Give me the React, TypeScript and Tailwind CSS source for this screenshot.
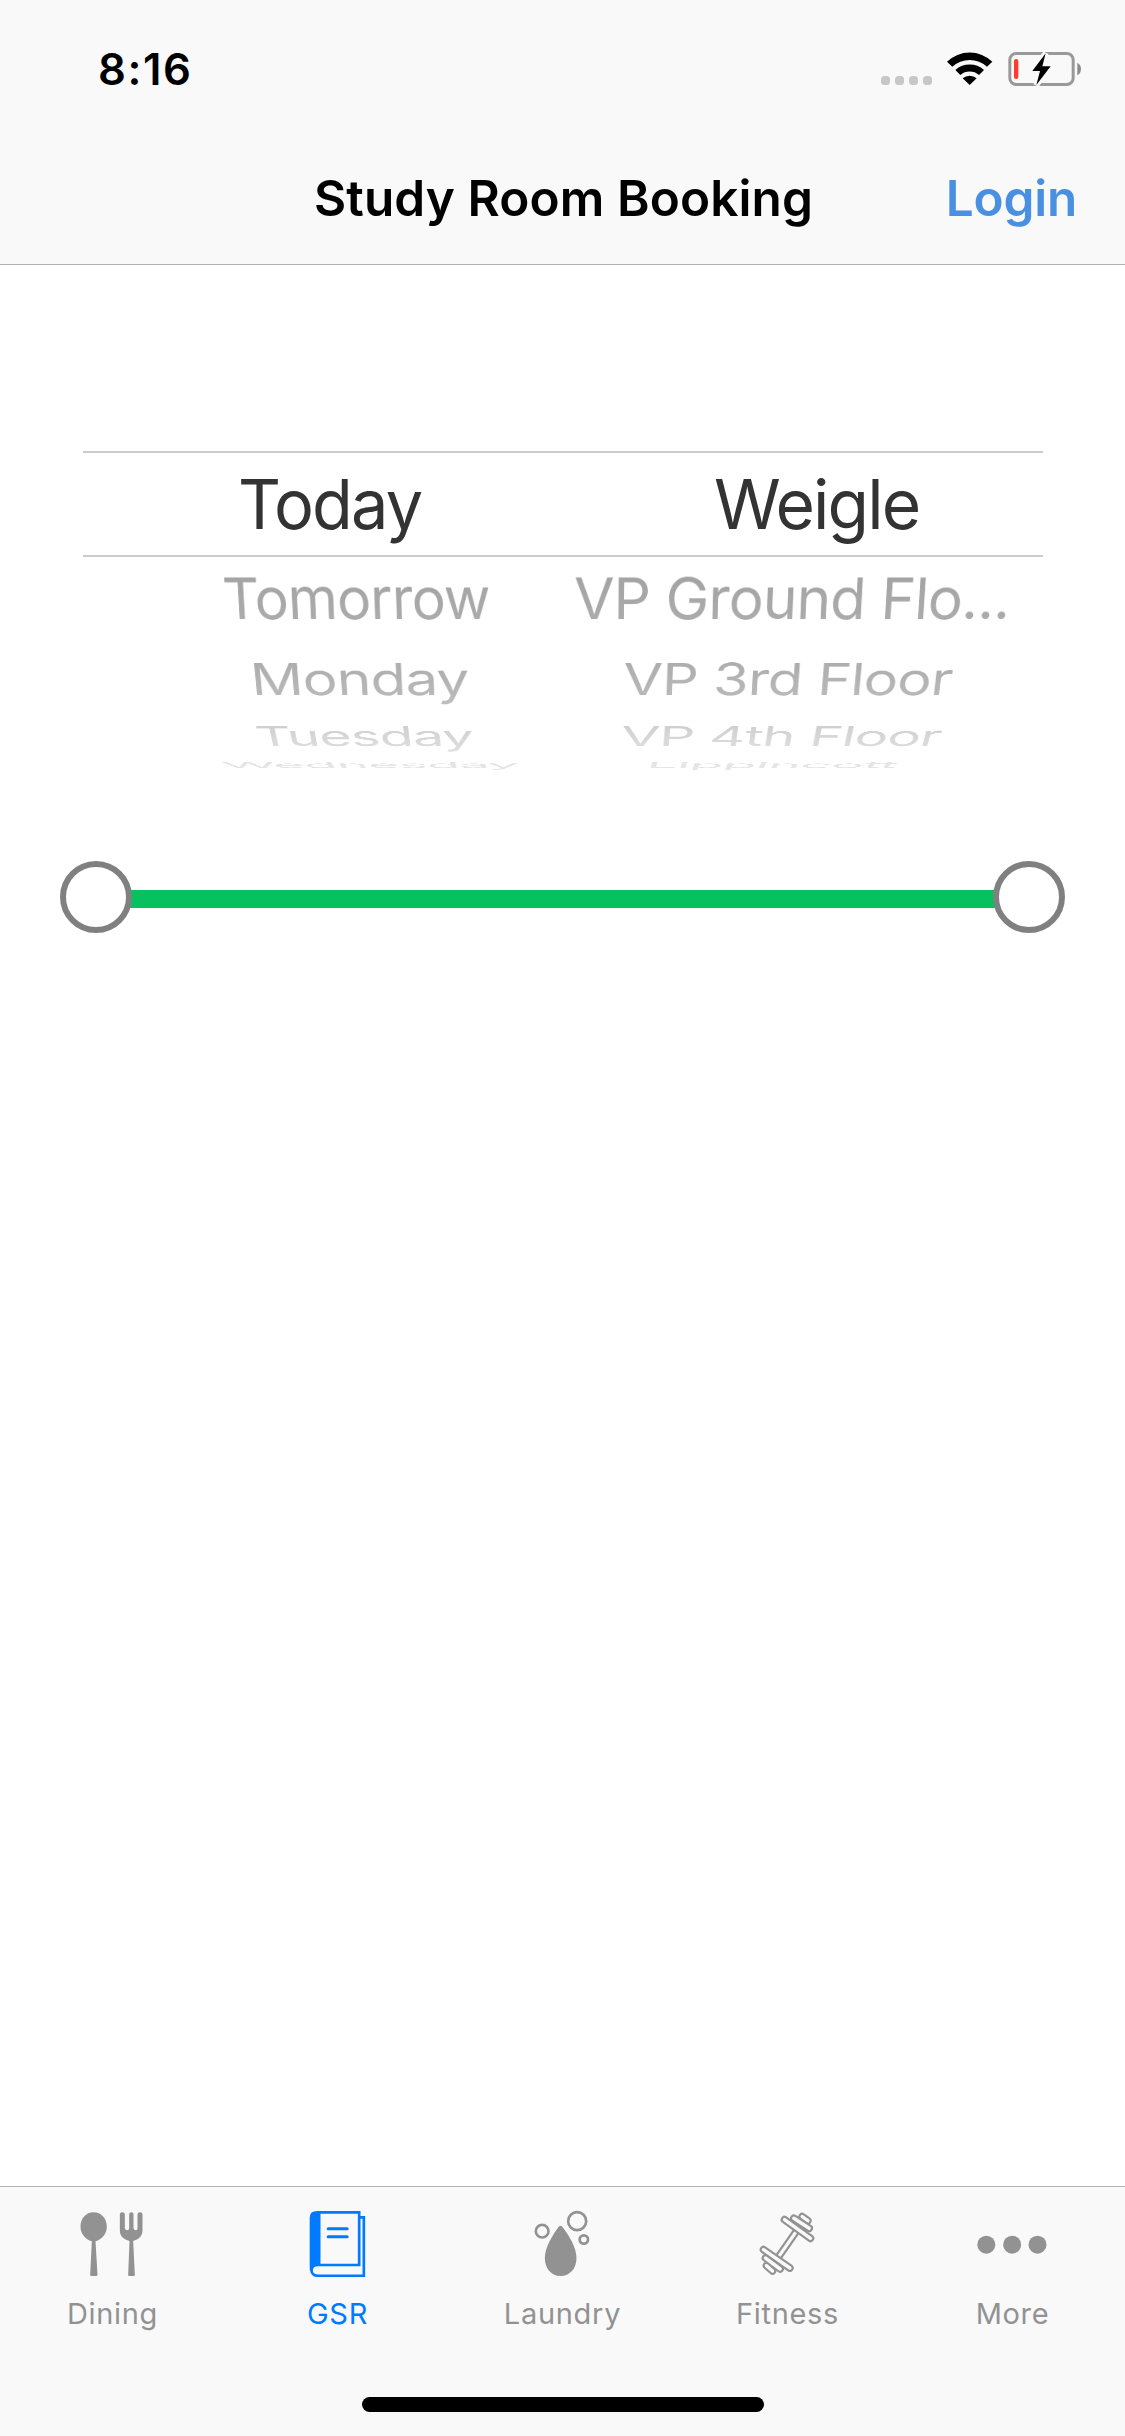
import type { CSSProperties, ReactNode } from 'react';

const PAGE_CENTER = 562.5;

type Word = { text: string; left: number; scale: number };
type Row = {
  box: string;
  baseline: number;
  flatten: number;
  depth: number;
  words: [Word, Word];
};

const selected: Row = {
  box: 'h-[102px] leading-[102px] text-[#333333] tracking-[-1.9px]',
  baseline: 76,
  flatten: 0.99,
  depth: 0,
  words: [
    { text: 'Today', left: 238.3, scale: 0.966 },
    { text: 'Weigle', left: 714, scale: 0.981 },
  ],
};

const upcoming: Row[] = [
  {
    box: 'h-[74px] leading-[74px]',
    baseline: 62,
    flatten: 0.824,
    depth: 0.00015,
    words: [
      { text: 'Tomorrow', left: 224, scale: 0.824 },
      { text: 'VP Ground Flo...', left: 573.5, scale: 0.845 },
    ],
  },
  {
    box: 'h-[78px] leading-[78px]',
    baseline: 64,
    flatten: 0.637,
    depth: 0.0002,
    words: [
      { text: 'Monday', left: 252.2, scale: 0.843 },
      { text: 'VP 3rd Floor', left: 622.7, scale: 0.8295 },
    ],
  },
  {
    box: 'h-[24px] leading-[24px]',
    baseline: 37,
    flatten: 0.392,
    depth: 0.0003,
    words: [
      { text: 'Tuesday', left: 257.5, scale: 0.802 },
      { text: 'VP 4th Floor', left: 621.3, scale: 0.808 },
    ],
  },
  {
    box: 'h-[20px] leading-[20px]',
    baseline: 35,
    flatten: 0.118,
    depth: 0.0003,
    words: [
      { text: 'Wednesday', left: 225, scale: 0.784 },
      { text: 'Lippincott', left: 646.3, scale: 0.797 },
    ],
  },
];

/* Tilts a word away from the viewer, with the page centre as vanishing axis. */
function wheelStyle(word: Word, row: Row): CSSProperties {
  const origin = PAGE_CENTER - word.left;
  const shift = origin * (word.scale - 1);
  return {
    marginLeft: word.left,
    transformOrigin: `${origin}px ${row.baseline}px`,
    transform: `matrix3d(${word.scale},0,0,0, 0,${row.flatten},0,${row.depth}, 0,0,1,0, ${shift},0,0,1)`,
  };
}

function WheelRow({ row }: { row: Row }) {
  return (
    <div className={`grid grid-cols-1 text-[69px] whitespace-nowrap ${row.box}`}>
      {row.words.map((word) => (
        <span
          key={word.text}
          className="col-start-1 row-start-1 justify-self-start"
          style={wheelStyle(word, row)}
        >
          {word.text}
        </span>
      ))}
    </div>
  );
}

function StatusBar() {
  return (
    <div className="flex h-[132px] items-start justify-between pr-[44px] pl-[98px]">
      <span className="mt-[43px] text-[43.6px] leading-[54px] font-semibold tracking-[1.6px]">8:16</span>
      <div className="mt-[52px] flex h-[34px] items-start">
        <div className="mt-[24px] mr-[15px] flex gap-[5px]">
          {[0, 1, 2, 3].map((dot) => (
            <i key={dot} className="size-[9px] rounded-[3.5px] bg-[#c7c7c7]" />
          ))}
        </div>
        <svg className="h-[34px] w-[46px]" viewBox="0 0 138 102">
          <path d="M0 29 A98 98 0 0 1 136 29 L120 44 A77 77 0 0 0 16 44 Z" />
          <path d="M25 54 A65 65 0 0 1 111 54 L96 69 A43 43 0 0 0 40 69 Z" />
          <path d="M47 79 A32 32 0 0 1 89 79 L68 99 Z" />
        </svg>
        <svg className="ml-[15px] h-[34px] w-[73px]" viewBox="443 66 219 102">
          <rect x="448.5" y="70.5" width="190" height="93" rx="19" fill="none" stroke="#999999" strokeWidth="9" />
          <path d="M651 98 Q662 104 662 117 Q662 130 651 136 Z" fill="#8c8c8c" />
          <rect x="461" y="87" width="13" height="60" rx="6" fill="#ff3b30" />
          <path d="M556 70 L516 123 H539 L528 165 L571 109 H546 Z" stroke="#f9f9f9" strokeWidth="17" />
          <path d="M556 70 L516 123 H539 L528 165 L571 109 H546 Z" />
        </svg>
      </div>
    </div>
  );
}

function DiningIcon() {
  return (
    <svg className="size-[72px]" viewBox="109.5 105 216 216" fill="currentColor">
      <path d="M162 127 C186 127 202 146 202 170 C202 192 187 208 168 214 L174 315 Q174 318 170 318 H156 Q152 318 152 315 L157 214 C138 208 123 192 123 170 C123 146 139 127 162 127 Z" />
      <path d="M241 133 Q241 127 248 127 Q256 127 256 133 V174 Q257 181 263 181 Q269 181 269 174 V133 Q269 127 276 127 Q282 127 282 133 V174 Q283 181 289 181 Q294 181 294 174 V133 Q294 127 302 127 Q309 127 309 133 V181 C309 199 297 209 281 213 L286 315 Q286 318 282 318 H269 Q265 318 266 315 L270 213 C253 209 241 199 241 181 Z" />
    </svg>
  );
}

function BookIcon() {
  return (
    <svg className="size-[72px]" viewBox="94.5 105 216 216" fill="none" stroke="currentColor" strokeWidth="8">
      <path d="M121 297 V142 Q121 123 142 123 H153 V286 H146 Q130 287 121 297 Z" fill="currentColor" stroke="none" />
      <path d="M142 127 H269 V285 H146 C119 286 119 317.500 147 317.500 H283 V142 H270" />
      <path d="M125 140 V302" />
      <path d="M176 176 H233 M176 200 H233" strokeWidth="9" strokeLinecap="round" />
    </svg>
  );
}

function LaundryIcon() {
  return (
    <svg className="size-[72px]" viewBox="139.5 105 216 216" fill="none" stroke="currentColor" strokeWidth="8">
      <path d="M237 171 Q243 163 249 171 C268 196 291 232 291 264 C291 296 271 318 243 318 C216 318 196 296 196 264 C196 232 219 196 237 171 Z" fill="currentColor" stroke="none" />
      <circle cx="293" cy="153.500" r="27" />
      <circle cx="188" cy="183.500" r="19" />
      <circle cx="313" cy="208.500" r="12.500" />
    </svg>
  );
}

const plates = [
  'M308 140 L325 152',
  'M283 145 L329 175',
  'M255 149 L333 205',
  'M201 287 L219 303',
  'M198 264 L242 297',
  'M192 239 L271 294',
];

function FitnessIcon() {
  return (
    <svg className="size-[72px]" viewBox="154.5 105 216 216" fill="none" strokeLinecap="round">
      <path d="M236 262 L292 182" stroke="currentColor" strokeWidth="23" strokeLinecap="butt" />
      <path d="M236 262 L292 182" stroke="#f9f9f9" strokeWidth="10" strokeLinecap="butt" />
      {plates.map((d) => (
        <g key={d}>
          <path d={d} stroke="currentColor" strokeWidth="23" />
          <path d={d} stroke="#f9f9f9" strokeWidth="10.500" />
        </g>
      ))}
    </svg>
  );
}

function MoreIcon() {
  return (
    <svg className="size-[72px]" viewBox="169.5 105 216 216" fill="currentColor">
      <circle cx="200.500" cy="224" r="27" />
      <circle cx="278" cy="224" r="27" />
      <circle cx="354" cy="224" r="27" />
    </svg>
  );
}

const tabs: { label: string; icon: ReactNode; active?: boolean }[] = [
  { label: 'Dining', icon: <DiningIcon /> },
  { label: 'GSR', icon: <BookIcon />, active: true },
  { label: 'Laundry', icon: <LaundryIcon /> },
  { label: 'Fitness', icon: <FitnessIcon /> },
  { label: 'More', icon: <MoreIcon /> },
];

function SliderThumb() {
  return <div className="relative size-[72px] shrink-0 rounded-full border-[6px] border-[#808080] bg-white" />;
}

export default function App() {
  return (
    <div className="flex h-[2436px] w-[1125px] flex-col overflow-hidden bg-white font-['Inter',sans-serif] text-black">
      <header className="h-[265px] border-b border-[#b2b2b2] bg-[#f9f9f9]">
        <StatusBar />
        <div className="grid h-[132px] grid-cols-[1fr_auto_1fr] text-[49.5px] leading-[132px] font-semibold">
          <h1 className="col-start-2 pl-[2px] tracking-[0.1px]">Study Room Booking</h1>
          <a className="justify-self-end pr-[48px] tracking-[-0.2px] text-[#4a90e2]">Login</a>
        </div>
      </header>

      <main className="flex-1 pt-[186px]">
        <section className="h-[410px]">
          <div className="mx-[83px] h-[2px] w-[960px] bg-[#cccccc]" />
          <WheelRow row={selected} />
          <div className="mx-[83px] h-[2px] w-[960px] bg-[#cccccc]" />
          <div className="relative h-[231px] tracking-[-1px] text-[#a0a0a0]">
            {upcoming.map((row) => (
              <WheelRow key={row.words[0].text} row={row} />
            ))}
            <div className="absolute inset-0 bg-[linear-gradient(to_bottom,rgba(255,255,255,0.02)_0px,rgba(255,255,255,0.04)_20px,rgba(255,255,255,0.12)_61px,rgba(255,255,255,0.15)_108px,rgba(255,255,255,0.26)_137px,rgba(255,255,255,0.5)_169px,rgba(255,255,255,0.63)_189px,rgba(255,255,255,0.72)_208px)]" />
          </div>
        </section>

        <div className="mx-[60px] flex h-[72px] items-center">
          <SliderThumb />
          <div className="-mx-[6px] mt-[4px] h-[18px] flex-1 bg-[#06c25e]" />
          <SliderThumb />
        </div>
      </main>

      <nav className="h-[250px] border-t border-[#b2b2b2] bg-[#f9f9f9]">
        <div className="grid h-[210px] grid-cols-5">
          {tabs.map((tab) => (
            <div
              key={tab.label}
              className={`flex flex-col items-center pt-[18px] ${tab.active ? 'text-[#007aff]' : 'text-[#929292]'}`}
            >
              <div className="pr-[1px]">{tab.icon}</div>
              <span className="mt-[19px] text-[29px] leading-[36px] tracking-[0.7px]">{tab.label}</span>
            </div>
          ))}
        </div>
        <div className="mx-auto h-[15px] w-[402px] rounded-full bg-black" />
      </nav>
    </div>
  );
}
